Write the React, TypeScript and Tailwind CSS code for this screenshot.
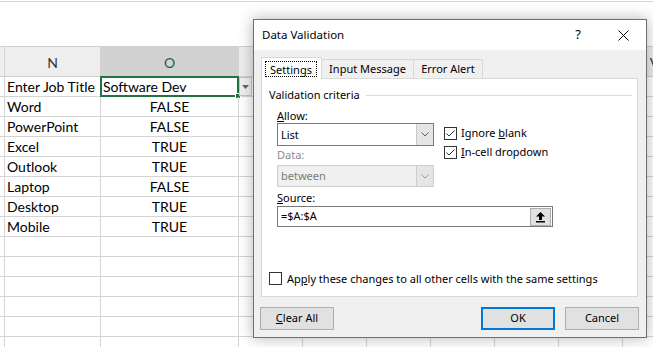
import React from "react";

const colWidths = ["w-[5px]", "w-[96px]", "w-[138px]", "w-[64px]", "w-[64px]", "w-[64px]", "w-[64px]", "w-[64px]", "w-[64px]", "w-[64px]"];
// P..U sit under the dialog, so only V peeks out at the right edge
const colNames = ["", "N", "O", "", "", "", "", "", "", "V"];

const rows: [string, string][] = [
  ["Enter Job Title", "Software Dev"],
  ["Word", "FALSE"],
  ["PowerPoint", "FALSE"],
  ["Excel", "TRUE"],
  ["Outlook", "TRUE"],
  ["Laptop", "FALSE"],
  ["Desktop", "TRUE"],
  ["Mobile", "TRUE"],
  ["", ""],
  ["", ""],
  ["", ""],
  ["", ""],
  ["", ""],
  ["", ""],
];

function CheckBox({ checked }: { checked?: boolean }) {
  return (
    <svg width="13" height="13" viewBox="0 0 13 13" className="shrink-0">
      <rect x="0.5" y="0.5" width="12" height="12" fill="#fff" stroke="#333" />
      {checked && <polyline points="2.5,6.5 5,9 10.5,3.5" fill="none" stroke="#333" strokeWidth="1" />}
    </svg>
  );
}

function Chevron({ color = "#606060" }: { color?: string }) {
  return (
    <svg width="8" height="5" viewBox="0 0 8 5">
      <polyline points="0.5,0.5 4,4 7.5,0.5" fill="none" stroke={color} strokeWidth="1" />
    </svg>
  );
}

function Sheet() {
  return (
    <div className="flex flex-col font-['Lato',sans-serif] text-[14px] text-black">
      <div className="h-[2px] border-b border-[#d8d8d8]" />
      <div className="h-[44px]" />
      {/* column headers */}
      <div className="flex h-[31px] border-y border-[#d0d0d0] bg-[#eeeeee]">
        {colWidths.map((w, i) => (
          <div
            key={i}
            className={`${w} shrink-0 border-r border-[#d4d4d4] flex items-end justify-center pb-[3px] ${
              i === 2 ? "bg-[#d2d2d2] text-[#1e5e3a]" : "text-[#333]"
            }`}
          >
            {colNames[i]}
          </div>
        ))}
      </div>
      {rows.map(([a, b], r) => (
        <div key={r} className="flex h-[20px] border-b border-[#d4d4d4]">
          {colWidths.map((w, i) => (
            <div key={i} className={`${w} shrink-0 border-r border-[#d4d4d4] relative leading-[19px]`}>
              {i === 1 && <span className="pl-[2px]">{a}</span>}
              {i === 2 && r === 0 && (
                <>
                  <span className="pl-[2px]">{b}</span>
                  <div className="absolute -left-[1px] -top-[1px] w-[139px] h-[21px] border-2 border-[#217346]" />
                  <div className="absolute -right-[3px] -bottom-[3px] w-[6px] h-[6px] bg-[#217346] border border-white" />
                </>
              )}
              {i === 2 && r > 0 && <div className="text-center">{b}</div>}
              {i === 3 && r === 0 && (
                <div className="absolute left-0 top-0 w-[13px] h-[19px] bg-[#f0f0f0] border border-[#c6c6c6] flex items-center justify-center">
                  <svg width="7" height="4" viewBox="0 0 7 4">
                    <polygon points="0,0 7,0 3.5,4" fill="#666" />
                  </svg>
                </div>
              )}
            </div>
          ))}
        </div>
      ))}
    </div>
  );
}

function Dialog() {
  return (
    <div className="absolute left-[253px] top-[19px] w-[394px] h-[319px] border border-[#6f6f6f] bg-[#f0f0f0] shadow-[0_0_14px_rgba(0,0,0,0.3)] flex flex-col font-['Noto_Sans',sans-serif] text-[11px] text-black">
      {/* title bar */}
      <div className="h-[30px] shrink-0 bg-white flex items-center pl-[8px] pr-[17px]">
        <span className="flex-1 text-[11.5px]">Data Validation</span>
        <span className="mr-[37px] text-[13px]">?</span>
        <svg width="11" height="11" viewBox="0 0 11 11">
          <line x1="0.5" y1="0.5" x2="10.5" y2="10.5" stroke="#000" />
          <line x1="10.5" y1="0.5" x2="0.5" y2="10.5" stroke="#000" />
        </svg>
      </div>

      {/* tabs */}
      <div className="flex items-end pl-[7px] pt-[7px]">
        <div className="relative z-10 -mb-[1px] w-[61px] h-[22px] bg-white border border-b-0 border-[#d9d9d9] pt-[3px] pl-[3px]">
          <div className="w-[52px] h-[16px] border border-dotted border-black flex items-center justify-center leading-none">
            Settings
          </div>
        </div>
        <div className="w-[92px] h-[20px] -mb-[1px] bg-[#f0f0f0] border border-l-0 border-[#d9d9d9] flex items-center justify-center">
          Input Message
        </div>
        <div className="w-[69px] h-[20px] -mb-[1px] bg-[#f0f0f0] border border-l-0 border-[#d9d9d9] flex items-center justify-center">
          Error Alert
        </div>
      </div>

      {/* panel */}
      <div className="ml-[7px] w-[377px] h-[219px] shrink-0 bg-white border border-[#d9d9d9] flex flex-col">
        <div className="mt-[8px] pl-[7px] pr-[5px] h-[16px] flex items-center gap-[6px]">
          <span>Validation criteria</span>
          <div className="flex-1 h-[1px] bg-[#dcdcdc]" />
        </div>

        <div className="pl-[15px] mt-[5px] flex flex-col">
          <div className="flex gap-[10px]">
            <div className="w-[157px] flex flex-col">
              <div className="h-[15px] leading-[15px]">
                <u>A</u>llow:
              </div>
              <div className="h-[23px] border border-[#7a7a7a] bg-white flex">
                <div className="flex-1 pl-[3px] leading-[21px]">List</div>
                <div className="w-[17px] bg-[#e5e5e5] border-l border-[#c8c8c8] flex items-center justify-center">
                  <Chevron />
                </div>
              </div>
              <div className="h-[15px] leading-[15px] mt-[1px] text-[#8a8a8a]">Data:</div>
              <div className="mt-[3px] h-[22px] border border-[#cccccc] bg-[#f0f0f0] flex">
                <div className="flex-1 pl-[3px] leading-[20px] text-[#7a7a7a]">between</div>
                <div className="w-[17px] bg-[#e5e5e5] border-l border-[#cccccc] flex items-center justify-center">
                  <Chevron color="#9a9a9a" />
                </div>
              </div>
            </div>
            <div className="flex flex-col gap-[6px] pt-[19px]">
              <div className="flex items-center gap-[4px] h-[13px]">
                <CheckBox checked />
                <span>
                  Ignore <u>b</u>lank
                </span>
              </div>
              <div className="flex items-center gap-[4px] h-[13px]">
                <CheckBox checked />
                <span>
                  <u>I</u>n-cell dropdown
                </span>
              </div>
            </div>
          </div>
          <div className="h-[15px] leading-[15px] mt-[3px]">
            <u>S</u>ource:
          </div>
          <div className="mt-[1px] w-[276px] h-[21px] border border-[#7a7a7a] bg-white flex items-center">
            <div className="flex-1 pl-[3px]">=$A:$A</div>
            <div className="w-[21px] h-[18px] mr-[1px] bg-[#e1e1e1] border border-[#adadad] flex items-center justify-center">
              <svg width="11" height="12" viewBox="0 0 11 12">
                <path d="M5.5 1 L10 5.5 L7 5.5 L7 9 L4 9 L4 5.5 L1 5.5 Z" fill="#000" />
                <rect x="1" y="10" width="9" height="1.5" fill="#000" />
              </svg>
            </div>
          </div>
        </div>

        <div className="mt-auto mb-[9px] pl-[7px] flex items-center gap-[5px]">
          <CheckBox />
          <span>
            Ap<u>p</u>ly these changes to all other cells with the same settings
          </span>
        </div>
      </div>

      {/* buttons */}
      <div className="mt-[10px] pl-[6px] pr-[7px] flex">
        <button className="w-[74px] h-[23px] bg-[#e1e1e1] border border-[#adadad]">
          <u>C</u>lear All
        </button>
        <div className="flex-1" />
        <button className="w-[74px] h-[23px] bg-[#e1e1e1] border-2 border-[#0078d7]">OK</button>
        <button className="ml-[10px] w-[74px] h-[23px] bg-[#e1e1e1] border border-[#adadad]">Cancel</button>
      </div>
    </div>
  );
}

export default function App() {
  return (
    <div className="relative w-[653px] h-[347px] overflow-hidden bg-white">
      <Sheet />
      <Dialog />
    </div>
  );
}
